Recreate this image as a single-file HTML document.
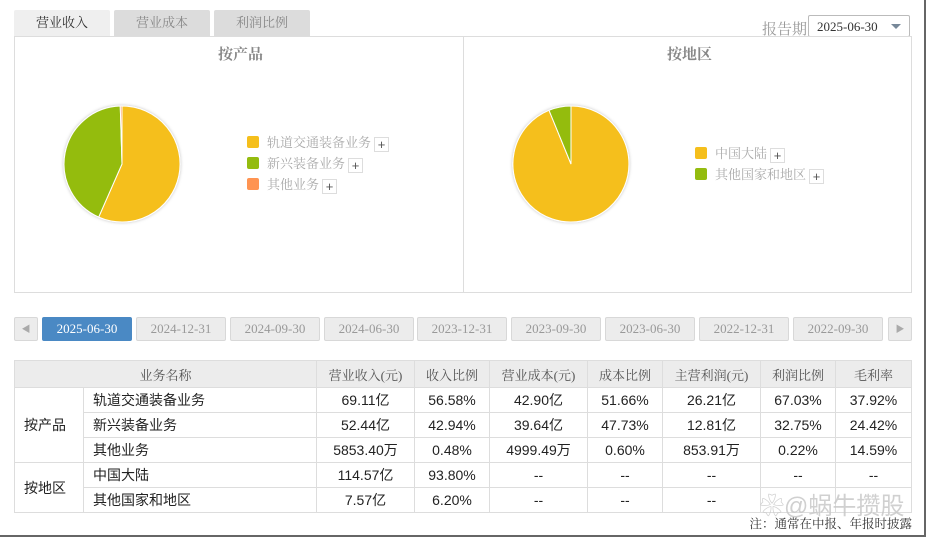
<!DOCTYPE html>
<html><head><meta charset="utf-8"><style>
*{margin:0;padding:0;box-sizing:border-box}
body{width:926px;height:537px;background:#fff;position:relative;overflow:hidden;font-family:"Liberation Sans","Noto Sans CJK SC",sans-serif}
.sf{font-family:"Liberation Serif","Noto Serif CJK SC",serif}
.a{position:absolute}
.tab{position:absolute;top:10px;height:26px;width:96px;background:#dcdcdc;color:#888;font-size:13px;text-align:center;line-height:26px;border-radius:2px 2px 0 0}
.ttl{position:absolute;top:43px;font-size:15px;color:#888;font-weight:bold}
.lg{position:absolute;font-size:13px;color:#aaa;line-height:14px;white-space:nowrap}
.lg i{display:inline-block;width:12px;height:12px;border-radius:2px;vertical-align:-1px;margin-right:8px}
.lg b{display:inline-block;width:15px;height:15px;border:1px solid #ddd;color:#555;font-weight:normal;text-align:center;line-height:13px;font-size:13px;margin-left:3px;vertical-align:-2px;font-family:"Liberation Sans",sans-serif}
.db{position:absolute;top:317px;height:24px;width:90px;background:#ececec;border:1px solid #d8d8d8;border-radius:2px;color:#999;font-size:13px;text-align:center;line-height:22px}
table{position:absolute;left:14px;top:360px;border-collapse:collapse;font-size:14px;color:#222}
td{border:1px solid #ddd;height:25px;text-align:center;padding:0}
tr.h td{background:#ececec;color:#555;font-size:13px;height:27px}
td.l{text-align:left;padding-left:9px}
</style></head><body>
<div class="tab sf" style="left:14px;background:#efefef;color:#333">营业收入</div>
<div class="tab sf" style="left:114px">营业成本</div>
<div class="tab sf" style="left:214px">利润比例</div>
<div class="a sf" style="left:762px;top:18px;font-size:15px;color:#999">报告期</div>
<div class="a sf" style="left:808px;top:15px;width:102px;height:22px;border:1px solid #bbb;border-radius:2px;font-size:13px;color:#333;line-height:22px;padding-left:8px">2025-06-30<span class="a" style="right:8px;top:8px;border-left:5px solid transparent;border-right:5px solid transparent;border-top:5px solid #789"></span></div>
<div class="a" style="left:14px;top:36px;width:898px;height:257px;border:1px solid #ddd"></div>
<div class="a" style="left:463px;top:36px;width:1px;height:257px;background:#ddd"></div>
<div class="ttl sf" style="left:218px">按产品</div>
<div class="ttl sf" style="left:667px">按地区</div>
<svg class="a" style="left:0;top:0" width="926" height="300">
<defs><filter id="s"><feDropShadow dx="0" dy="0" stdDeviation="1.5" flood-color="#000" flood-opacity="0.25"/></filter></defs>
<g filter="url(#s)" stroke="#fff" stroke-width="1">
<path d="M122,164 L122,106 A58,58 0 1 1 98.7,217.1 Z" fill="#f5bf1c"/>
<path d="M122,164 L98.7,217.1 A58,58 0 0 1 120.25,106.03 Z" fill="#94bc0f"/>
<path d="M122,164 L120.25,106.03 A58,58 0 0 1 122,106 Z" fill="#ff9452"/>
<path d="M571,164 L571,106 A58,58 0 1 1 549,110.3 Z" fill="#f5bf1c"/>
<path d="M571,164 L549,110.3 A58,58 0 0 1 571,106 Z" fill="#94bc0f"/>
</g></svg>
<div class="lg sf" style="left:247px;top:136px"><i style="background:#f5bf1c"></i>轨道交通装备业务<b>+</b></div>
<div class="lg sf" style="left:247px;top:157px"><i style="background:#94bc0f"></i>新兴装备业务<b>+</b></div>
<div class="lg sf" style="left:247px;top:178px"><i style="background:#ff9452"></i>其他业务<b>+</b></div>
<div class="lg sf" style="left:695px;top:147px"><i style="background:#f5bf1c"></i>中国大陆<b>+</b></div>
<div class="lg sf" style="left:695px;top:168px"><i style="background:#94bc0f"></i>其他国家和地区<b>+</b></div>
<div class="db" style="left:14px;width:24px;font-size:9px;color:#aaa">◀</div>
<div class="db sf" style="left:42px;background:#4a89c4;border-color:#4a89c4;color:#fff">2025-06-30</div>
<div class="db sf" style="left:136px">2024-12-31</div>
<div class="db sf" style="left:230px">2024-09-30</div>
<div class="db sf" style="left:324px">2024-06-30</div>
<div class="db sf" style="left:417px">2023-12-31</div>
<div class="db sf" style="left:511px">2023-09-30</div>
<div class="db sf" style="left:605px">2023-06-30</div>
<div class="db sf" style="left:699px">2022-12-31</div>
<div class="db sf" style="left:793px">2022-09-30</div>
<div class="db" style="left:888px;width:24px;font-size:9px;color:#aaa">▶</div>
<table>
<colgroup><col style="width:69px"><col style="width:233px"><col style="width:98px"><col style="width:75px"><col style="width:98px"><col style="width:75px"><col style="width:98px"><col style="width:75px"><col style="width:76px"></colgroup>
<tr class="h sf"><td colspan="2">业务名称</td><td>营业收入(元)</td><td>收入比例</td><td>营业成本(元)</td><td>成本比例</td><td>主营利润(元)</td><td>利润比例</td><td>毛利率</td></tr>
<tr><td rowspan="3" class="l">按产品</td><td class="l">轨道交通装备业务</td><td>69.11亿</td><td>56.58%</td><td>42.90亿</td><td>51.66%</td><td>26.21亿</td><td>67.03%</td><td>37.92%</td></tr>
<tr><td class="l">新兴装备业务</td><td>52.44亿</td><td>42.94%</td><td>39.64亿</td><td>47.73%</td><td>12.81亿</td><td>32.75%</td><td>24.42%</td></tr>
<tr><td class="l">其他业务</td><td>5853.40万</td><td>0.48%</td><td>4999.49万</td><td>0.60%</td><td>853.91万</td><td>0.22%</td><td>14.59%</td></tr>
<tr><td rowspan="2" class="l">按地区</td><td class="l">中国大陆</td><td>114.57亿</td><td>93.80%</td><td>--</td><td>--</td><td>--</td><td>--</td><td>--</td></tr>
<tr><td class="l">其他国家和地区</td><td>7.57亿</td><td>6.20%</td><td>--</td><td>--</td><td>--</td><td></td><td></td></tr>
</table>
<div class="a" style="left:760px;top:486px;font-size:24px;color:rgba(200,200,200,0.85);white-space:nowrap">❀@蜗牛攒股</div>
<div class="a sf" style="right:14px;top:514px;font-size:12.5px;color:#333;white-space:nowrap">注：通常在中报、年报时披露</div>
<div class="a" style="left:924px;top:0;width:2px;height:537px;background:#666"></div>
<div class="a" style="left:0;top:535px;width:926px;height:2px;background:#666"></div>
</body></html>
